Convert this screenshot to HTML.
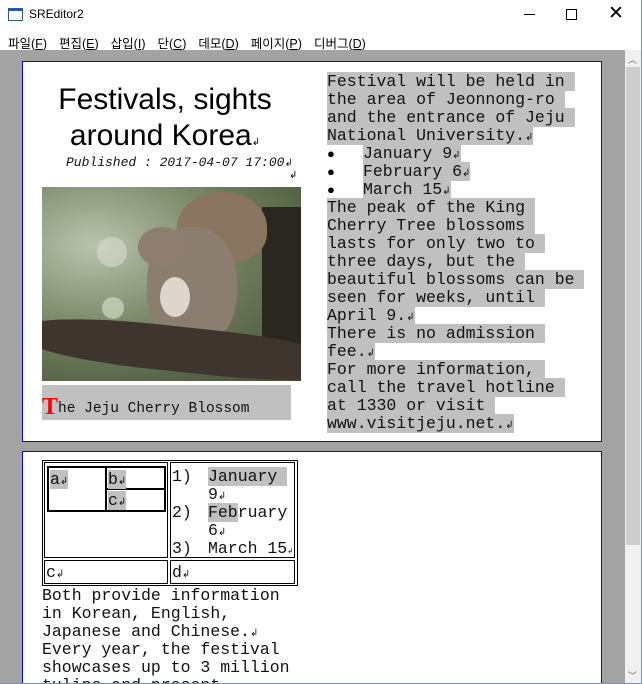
<!DOCTYPE html>
<html><head><meta charset="utf-8"><style>
*{margin:0;padding:0;box-sizing:border-box}
html,body{width:642px;height:684px;overflow:hidden}
body{background:#fff;position:relative;font-family:"Liberation Sans","Noto Sans CJK KR",sans-serif}
.abs{position:absolute}
.m{font-family:"Liberation Mono",monospace;font-size:16.5px;line-height:18px;white-space:pre;color:#111}
.h{background:#c0c0c0}
.r{font-size:10px;line-height:1;font-family:"DejaVu Sans",sans-serif}
.ln{position:absolute;left:327px}
.b{position:absolute;left:327px;font-size:13px;line-height:18px;color:#000}
</style></head><body>
<div class="abs" style="left:0;top:0;width:642px;height:30px;background:#fff"></div>
<div class="abs" style="left:8px;top:8px;width:15px;height:13px;border:1px solid #2b5797;border-top-width:3px;background:#fff"></div>
<div class="abs" style="left:29px;top:7px;font-size:12px;color:#000">SREditor2</div>
<div class="abs" style="left:524px;top:14px;width:11px;height:1px;background:#000"></div>
<div class="abs" style="left:566px;top:9px;width:11px;height:11px;border:1px solid #000"></div>
<div class="abs" style="left:608px;top:2px;font-size:19px;font-weight:100;color:#000">✕</div>
<div class="abs" style="left:8px;top:33px;font-size:12.5px;color:#000">
<span style="margin-right:12px">파일(<u>F</u>)</span><span style="margin-right:12px">편집(<u>E</u>)</span><span style="margin-right:12px">삽입(<u>I</u>)</span><span style="margin-right:12px">단(<u>C</u>)</span><span style="margin-right:12px">데모(<u>D</u>)</span><span style="margin-right:12px">페이지(<u>P</u>)</span><span>디버그(<u>D</u>)</span></div>
<div class="abs" style="left:0;top:50px;width:625px;height:634px;background:#a3a3a3;overflow:hidden">
<div class="abs" style="left:22px;top:11px;width:580px;height:381px;background:#fff;border:1px solid #0000ff"></div>
<div class="abs" style="left:22px;top:401px;width:580px;height:300px;background:#fff;border:1px solid #0000ff"></div>
<div class="abs m" style="left:42px;top:537px">Both provide information
in Korean, English,
Japanese and Chinese.<span class="r">↲</span>
Every year, the festival
showcases up to 3 million
tulips and present</div>
</div>
<div class="abs" style="left:625px;top:50px;width:16px;height:634px;background:#f0f0f0"></div>
<div class="abs" style="left:626px;top:67px;width:14px;height:478px;background:#cdcdcd"></div>
<div class="abs" style="left:628px;top:53px;font-size:9px;color:#606060">︿</div>
<div class="abs" style="left:628px;top:669px;font-size:9px;color:#606060">﹀</div>
<div class="abs" style="left:641px;top:0;width:1px;height:684px;background:#4aa3c0"></div>
<div class="abs" style="left:36px;top:82px;width:258px;text-align:center;font-size:30px;line-height:36px;color:#000">Festivals, sights<br>around Korea<span class="r">↲</span></div>
<div class="abs" style="left:66px;top:155px;font-family:'Liberation Mono',monospace;font-style:italic;font-size:13px;color:#111;white-space:pre">Published : 2017-04-07 17:00<span class="r">↲</span></div>
<div class="abs r" style="left:289px;top:171px">↲</div>
<div class="abs" style="left:42px;top:187px;width:259px;height:194px;overflow:hidden;background:radial-gradient(ellipse at 20% 30%,#b9c4ae,#6f7d5c 50%,#3f4a33 100%)">
 <div class="abs" style="left:220px;top:20px;width:45px;height:160px;background:#2a2620"></div>
 <div class="abs" style="left:55px;top:50px;width:30px;height:30px;border-radius:50%;background:#d8dccf;opacity:.6"></div>
 <div class="abs" style="left:60px;top:110px;width:22px;height:22px;border-radius:50%;background:#dfe2d6;opacity:.6"></div>
 <div class="abs" style="left:135px;top:5px;width:90px;height:70px;border-radius:50% 50% 40% 40%;background:#8a7560"></div>
 <div class="abs" style="left:105px;top:40px;width:90px;height:120px;border-radius:45%;background:#8b7d70"></div>
 <div class="abs" style="left:96px;top:40px;width:48px;height:40px;border-radius:50%;background:#8e7e6f"></div>
 <div class="abs" style="left:118px;top:90px;width:30px;height:40px;border-radius:50%;background:#ddd6cc"></div>
 <div class="abs" style="left:-20px;top:140px;width:320px;height:45px;border-radius:40%;background:#3d352e;transform:rotate(6deg)"></div>
</div>
<div class="abs m h" style="left:42px;top:385px;width:249px;height:35px;padding:13px 0 0 0;font-size:14.5px"><span style="color:#f00;font-weight:bold;font-size:24px;font-family:'Liberation Serif',serif;vertical-align:-2px">T</span>he Jeju Cherry Blossom </div>
<div class="ln m" style="top:73px"><span class="h">Festival will be held in </span></div>
<div class="ln m" style="top:91px"><span class="h">the area of Jeonnong-ro </span></div>
<div class="ln m" style="top:109px"><span class="h">and the entrance of Jeju </span></div>
<div class="ln m" style="top:127px"><span class="h">National University.<span class="r">↲</span></span></div>
<div class="b" style="top:145px">●</div><div class="abs m" style="left:363px;top:145px"><span class="h">January 9<span class="r">↲</span></span></div>
<div class="b" style="top:163px">●</div><div class="abs m" style="left:363px;top:163px"><span class="h">February 6<span class="r">↲</span></span></div>
<div class="b" style="top:181px">●</div><div class="abs m" style="left:363px;top:181px"><span class="h">March 15<span class="r">↲</span></span></div>
<div class="ln m" style="top:199px"><span class="h">The peak of the King </span></div>
<div class="ln m" style="top:217px"><span class="h">Cherry Tree blossoms </span></div>
<div class="ln m" style="top:235px"><span class="h">lasts for only two to </span></div>
<div class="ln m" style="top:253px"><span class="h">three days, but the </span></div>
<div class="ln m" style="top:271px"><span class="h">beautiful blossoms can be </span></div>
<div class="ln m" style="top:289px"><span class="h">seen for weeks, until </span></div>
<div class="ln m" style="top:307px"><span class="h">April 9.<span class="r">↲</span></span></div>
<div class="ln m" style="top:325px"><span class="h">There is no admission </span></div>
<div class="ln m" style="top:343px"><span class="h">fee.<span class="r">↲</span></span></div>
<div class="ln m" style="top:361px"><span class="h">For more information, </span></div>
<div class="ln m" style="top:379px"><span class="h">call the travel hotline </span></div>
<div class="ln m" style="top:397px"><span class="h">at 1330 or visit </span></div>
<div class="ln m" style="top:415px"><span class="h">www.visitjeju.net.<span class="r">↲</span></span></div>
<div class="abs" style="left:42px;top:460px;width:256px;height:126px;border:1px solid #000"></div>
<div class="abs" style="left:44px;top:462px;width:124px;height:96px;border:1px solid #000"></div>
<div class="abs" style="left:170px;top:462px;width:125px;height:96px;border:1px solid #000"></div>
<div class="abs" style="left:44px;top:560px;width:124px;height:24px;border:1px solid #000"></div>
<div class="abs" style="left:170px;top:560px;width:125px;height:24px;border:1px solid #000"></div>
<div class="abs" style="left:47px;top:466px;width:119px;height:46px;border:2px solid #000"></div>
<div class="abs" style="left:105px;top:466px;width:2px;height:46px;background:#000"></div>
<div class="abs" style="left:105px;top:488px;width:61px;height:2px;background:#000"></div>
<div class="abs m" style="left:50px;top:471px"><span class="h">a<span class="r">↲</span></span></div>
<div class="abs m" style="left:108px;top:471px"><span class="h">b<span class="r">↲</span></span></div>
<div class="abs m" style="left:108px;top:492px"><span class="h">c<span class="r">↲</span></span></div>
<div class="abs m" style="left:172px;top:468px">1)</div><div class="abs m" style="left:208px;top:468px"><span class="h">January </span></div>
<div class="abs m" style="left:208px;top:486px">9<span class="r">↲</span></div>
<div class="abs m" style="left:172px;top:504px">2)</div><div class="abs m" style="left:208px;top:504px"><span class="h">Feb</span>ruary</div>
<div class="abs m" style="left:208px;top:522px">6<span class="r">↲</span></div>
<div class="abs m" style="left:172px;top:540px">3)</div><div class="abs m" style="left:208px;top:540px">March 15<span class="r" style="font-size:7px">↲</span></div>
<div class="abs m" style="left:46px;top:564px">c<span class="r">↲</span></div>
<div class="abs m" style="left:172px;top:564px">d<span class="r">↲</span></div>
<div class="abs" style="left:0;top:683px;width:642px;height:1px;background:#4aa3c0"></div>
</body></html>
